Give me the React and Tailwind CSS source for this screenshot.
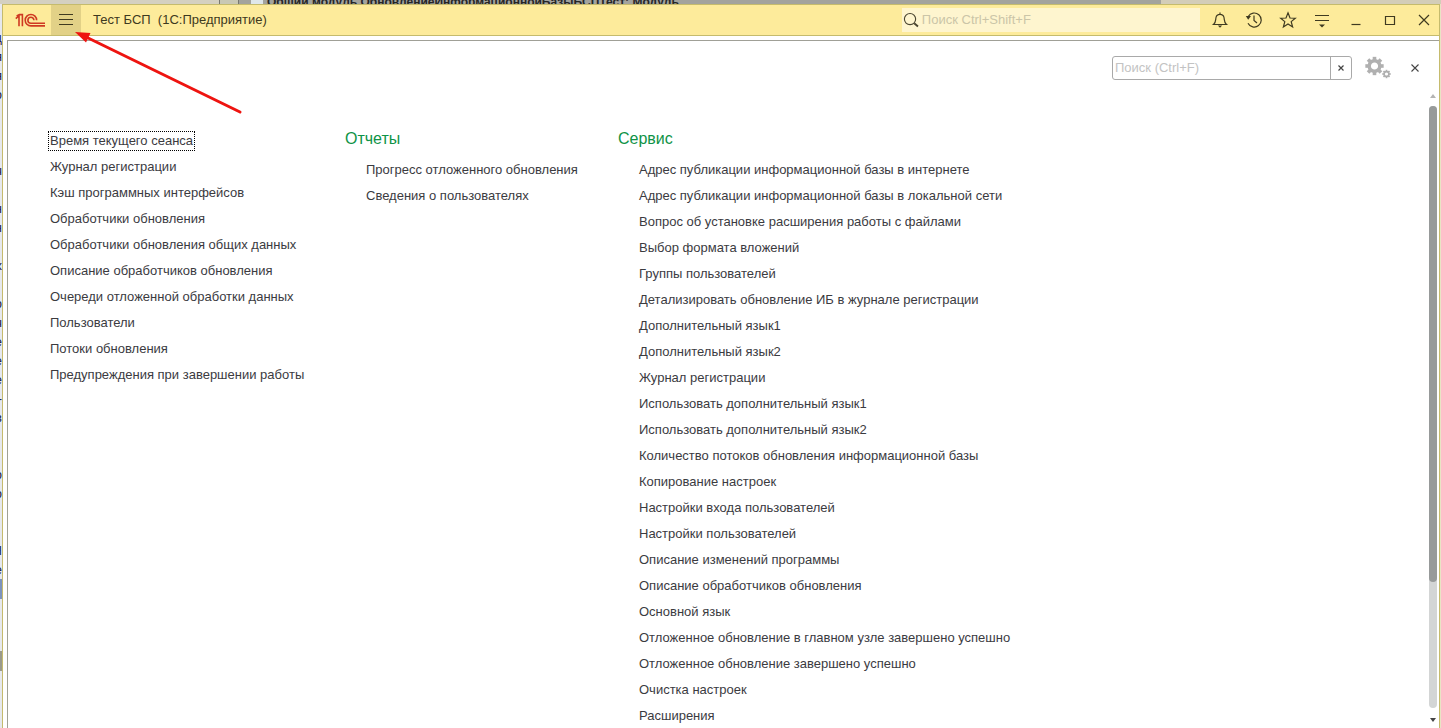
const mainLinks = [
    "Время текущего сеанса",
    "Журнал регистрации",
    "Кэш программных интерфейсов",
    "Обработчики обновления",
    "Обработчики обновления общих данных",
    "Описание обработчиков обновления",
    "Очереди отложенной обработки данных",
    "Пользователи",
    "Потоки обновления",
    "Предупреждения при завершении работы",
];

const reportLinks = [
    "Прогресс отложенного обновления",
    "Сведения о пользователях",
];

const serviceLinks = [
    "Адрес публикации информационной базы в интернете",
    "Адрес публикации информационной базы в локальной сети",
    "Вопрос об установке расширения работы с файлами",
    "Выбор формата вложений",
    "Группы пользователей",
    "Детализировать обновление ИБ в журнале регистрации",
    "Дополнительный язык1",
    "Дополнительный язык2",
    "Журнал регистрации",
    "Использовать дополнительный язык1",
    "Использовать дополнительный язык2",
    "Количество потоков обновления информационной базы",
    "Копирование настроек",
    "Настройки входа пользователей",
    "Настройки пользователей",
    "Описание изменений программы",
    "Описание обработчиков обновления",
    "Основной язык",
    "Отложенное обновление в главном узле завершено успешно",
    "Отложенное обновление завершено успешно",
    "Очистка настроек",
    "Расширения",
];

// Ends of the code lines that stick out from behind the window
const codeEdge = ["ц", "я", "я", "о", "", "", "", "ч", "", "н", "н", "", "х", "", "о", "ч", "е", "е", "е", "-", "в", "", "", "о", "о", "", "", "Н", "е"];

function Logo() {
    return (
        <svg width="30" height="16" viewBox="0 0 30 16" fill="none" stroke="#cf3a22" strokeWidth="1.6" aria-hidden="true">
            <path d="M0.8 6.6 L4 3.6 V14.2 M1.6 3.9 L4.4 2.6 H7.4 V14.2" />
            <path d="M21.6 8.2 A5.7 5.7 0 1 0 15.9 13.9 H30" />
            <path d="M18.9 8.2 A3 3 0 1 0 15.9 11.2 H30" />
        </svg>
    );
}

function Gear({ cx, cy, r, hole, tooth }) {
    return (
        <g transform={`translate(${cx} ${cy})`}>
            <circle r={(r + hole) / 2} fill="none" stroke="#b0b0b0" strokeWidth={r - hole} />
            {[0, 45, 90, 135, 180, 225, 270, 315].map((angle) => (
                <rect
                    key={angle}
                    x={-tooth / 2}
                    y={-r - tooth * 0.6}
                    width={tooth}
                    height={tooth}
                    fill="#b0b0b0"
                    transform={`rotate(${angle})`}
                />
            ))}
        </g>
    );
}

function TitleButton({ label, children }) {
    return (
        <button type="button" aria-label={label} className="flex h-full w-[34px] items-center justify-center">
            <svg width="18" height="18" viewBox="0 0 18 18" fill="none" stroke="#3f3a20" strokeWidth="1.2">
                {children}
            </svg>
        </button>
    );
}

function TitleBar() {
    return (
        <header className="flex h-[31px] shrink-0 items-center border-b border-[#c5bb6d] bg-[#fdeb9b]">
            <div className="flex w-12 shrink-0 justify-center pl-1.5">
                <Logo />
            </div>
            <button type="button" aria-label="Главное меню" className="flex h-full w-[30px] shrink-0 items-center justify-center bg-[#e2d187]">
                <svg width="16" height="12" viewBox="0 0 16 12" stroke="#3f3a20" strokeWidth="1">
                    <path d="M1 0.5 H15 M1 5.5 H15 M1 10.5 H15" />
                </svg>
            </button>
            <h1 className="ml-3 flex-1 whitespace-pre text-[13px] text-[#3d3920]">Тест БСП  (1С:Предприятие)</h1>
            <label className="flex h-6 w-[298px] items-center bg-[#fef5cf] pl-px">
                <svg width="18" height="18" viewBox="0 0 18 18" fill="none" stroke="#4a4530">
                    <circle cx="7.5" cy="8" r="6" strokeWidth="1.2" />
                    <path d="M12 12.5 L16 16" strokeWidth="2" />
                </svg>
                <input
                    type="text"
                    aria-label="Глобальный поиск"
                    placeholder="Поиск Ctrl+Shift+F"
                    className="ml-0.5 w-full min-w-0 bg-transparent text-[13px] outline-none placeholder:text-[#cbc5a8]"
                />
            </label>
            <div className="-mr-0.5 ml-[3px] flex h-full">
                <TitleButton label="Уведомления">
                    <path d="M2.5 13.5 C5 11.5 4.5 9 5 6.5 C5.4 4.3 7 3.4 9 3.4 C11 3.4 12.6 4.3 13 6.5 C13.5 9 13 11.5 15.5 13.5 Z M9 3.4 V1.5" />
                    <path d="M6.8 14.5 H11.2 L9 16.8 Z" fill="#3f3a20" stroke="none" />
                </TitleButton>
                <TitleButton label="История">
                    <path d="M3.2 5.5 A7 7 0 1 1 3 12.2" />
                    <path d="M9 4.5 V9.5 L12 12" />
                    <path d="M0.8 5 H6 L3.2 8.8 Z" fill="#3f3a20" stroke="none" />
                </TitleButton>
                <TitleButton label="Избранное">
                    <path d="M9 1.8 L11 7 L16.3 7.2 L12.2 10.6 L13.6 15.9 L9 12.9 L4.4 15.9 L5.8 10.6 L1.7 7.2 L7 7 Z" />
                </TitleButton>
                <TitleButton label="Сервис и настройки">
                    <path d="M2 4.5 H16 M2 9.5 H16" />
                    <path d="M6 13.5 H12 L9 16.5 Z" fill="#3f3a20" stroke="none" />
                </TitleButton>
                <TitleButton label="Свернуть">
                    <path d="M4.5 13.5 H13.5" />
                </TitleButton>
                <TitleButton label="Развернуть">
                    <path d="M4.5 5.5 H13.5 V13.5 H4.5 Z" />
                </TitleButton>
                <TitleButton label="Закрыть">
                    <path d="M4 4 L14 14 M14 4 L4 14" />
                </TitleButton>
            </div>
        </header>
    );
}

function MenuLink({ focused, children }) {
    return (
        <li className="flex h-[26px] items-center whitespace-nowrap">
            <a
                href="#"
                className={focused ? "-mx-0.5 border border-dotted border-black px-px leading-[18px]" : "leading-[18px]"}
            >
                {children}
            </a>
        </li>
    );
}

function MenuGroup({ title, links }) {
    return (
        <section>
            <h2 className="h-[30px] text-[16px] leading-6 text-[#0f9347]">{title}</h2>
            <ul className="pl-[21px]">
                {links.map((link) => (
                    <MenuLink key={link}>{link}</MenuLink>
                ))}
            </ul>
        </section>
    );
}

function ScrollBar() {
    return (
        <div className="flex w-2 shrink-0 flex-col items-center">
            <svg width="6" height="4" viewBox="0 0 6 4" className="mt-1 shrink-0" fill="#b4b4b4">
                <path d="M3 0 L6 4 H0 Z" />
            </svg>
            <div className="mt-2 w-2 flex-1 rounded-full bg-[#d3d5d5]">
                <div className="h-[79%] rounded-full bg-[#979a9a]"></div>
            </div>
            <svg width="6" height="4" viewBox="0 0 6 4" className="mt-2.5 mb-1.5 shrink-0" fill="#444">
                <path d="M0 0 H6 L3 4 Z" />
            </svg>
        </div>
    );
}

function MenuPanel() {
    return (
        <main className="mt-1 ml-1 flex min-h-0 flex-1 flex-col border-t border-l border-[#a0a097] bg-white">
            <div className="flex h-[49px] shrink-0 items-center justify-end pt-1 pr-[18px]">
                <div className="flex h-6 w-60 rounded-[3px] border border-[#a9a9a9]">
                    <input
                        type="text"
                        aria-label="Поиск"
                        placeholder="Поиск (Ctrl+F)"
                        className="min-w-0 flex-1 bg-transparent pl-0.5 text-[13px] outline-none placeholder:text-[#c3c3c3]"
                    />
                    <button type="button" aria-label="Очистить" className="flex w-[21px] items-center justify-center border-l border-[#a9a9a9]">
                        <svg width="6" height="6" viewBox="0 0 6 6" stroke="#444" strokeWidth="1.2">
                            <path d="M0.5 0.5 L5.5 5.5 M5.5 0.5 L0.5 5.5" />
                        </svg>
                    </button>
                </div>
                <button type="button" aria-label="Настройка" className="ml-3">
                    <svg width="28" height="24" viewBox="0 0 28 24">
                        <Gear cx={10.5} cy={10} r={7} hole={3.6} tooth={3.6} />
                        <Gear cx={22.5} cy={18} r={3.2} hole={1.6} tooth={1.7} />
                    </svg>
                </button>
                <button type="button" aria-label="Закрыть меню" className="ml-[17px] flex size-3 items-center justify-center">
                    <svg width="8" height="8" viewBox="0 0 8 8" stroke="#444" strokeWidth="1.1">
                        <path d="M0.5 0.5 L7.5 7.5 M7.5 0.5 L0.5 7.5" />
                    </svg>
                </button>
            </div>
            <div className="flex min-h-0 flex-1 pr-0.5">
                <nav className="flex min-w-0 flex-1 gap-[43px] overflow-hidden pt-[37px] pl-[42px] text-[13px] text-[#3b3b3f]">
                    <ul className="w-[252px] shrink-0 pt-px">
                        {mainLinks.map((link, index) => (
                            <MenuLink key={link} focused={index === 0}>{link}</MenuLink>
                        ))}
                    </ul>
                    <div className="w-[230px] shrink-0">
                        <MenuGroup title="Отчеты" links={reportLinks} />
                    </div>
                    <MenuGroup title="Сервис" links={serviceLinks} />
                </nav>
                <ScrollBar />
            </div>
        </main>
    );
}

export default function App() {
    return (
        <div className="relative flex h-screen flex-col overflow-hidden bg-[#eceadb] font-['Liberation_Sans',Arial,sans-serif]">
            {/* Window behind */}
            <div className="flex h-1 shrink-0 overflow-hidden bg-[#a3a39d]">
                <div className="w-[219px] bg-[#d4d0c0]"></div>
                <div className="w-5 border-x border-[#77776f] bg-[#c9c8b4]"></div>
                <div className="ml-3 w-3 bg-[#dfe7ea]"></div>
                <div className="ml-1 flex-1 text-[12px] leading-3 font-bold whitespace-nowrap text-[#262626]">
                    <div className="-mt-1">Общий модуль ОбновлениеИнформационнойБазыБСПТест: Модуль</div>
                </div>
                <div className="w-[280px] bg-[#d3cdb8]"></div>
            </div>

            <div className="flex min-h-0 flex-1">
                <div className="flex w-0.5 shrink-0 flex-col overflow-hidden bg-[#e6e8ee] pt-6 text-[13px] text-[#20204a]">
                    {codeEdge.map((letter, index) => (
                        <div key={index} className="flex h-[19px] shrink-0 items-center justify-end">
                            {letter}
                        </div>
                    ))}
                    <div className="h-5 shrink-0 bg-[#7d93bd]"></div>
                    <div className="mt-[52px] h-5 shrink-0 bg-[#9a9a8c]"></div>
                </div>
                <div className="flex min-w-0 flex-1 flex-col border-x border-t border-[#c5bb6d] bg-white">
                    <TitleBar />
                    <MenuPanel />
                </div>
                <div className="w-px shrink-0 bg-[#e9e4c4]"></div>
            </div>

            {/* Pointer to the menu button */}
            <svg width="180" height="90" viewBox="0 0 180 90" className="pointer-events-none absolute top-7 left-[70px]">
                <path d="M14 8 L170 84" stroke="#ee1410" strokeWidth="3" strokeLinecap="round" />
                <path d="M5 4 L20.5 5 L16 14.5 Z" fill="#ee1410" />
            </svg>
        </div>
    );
}
